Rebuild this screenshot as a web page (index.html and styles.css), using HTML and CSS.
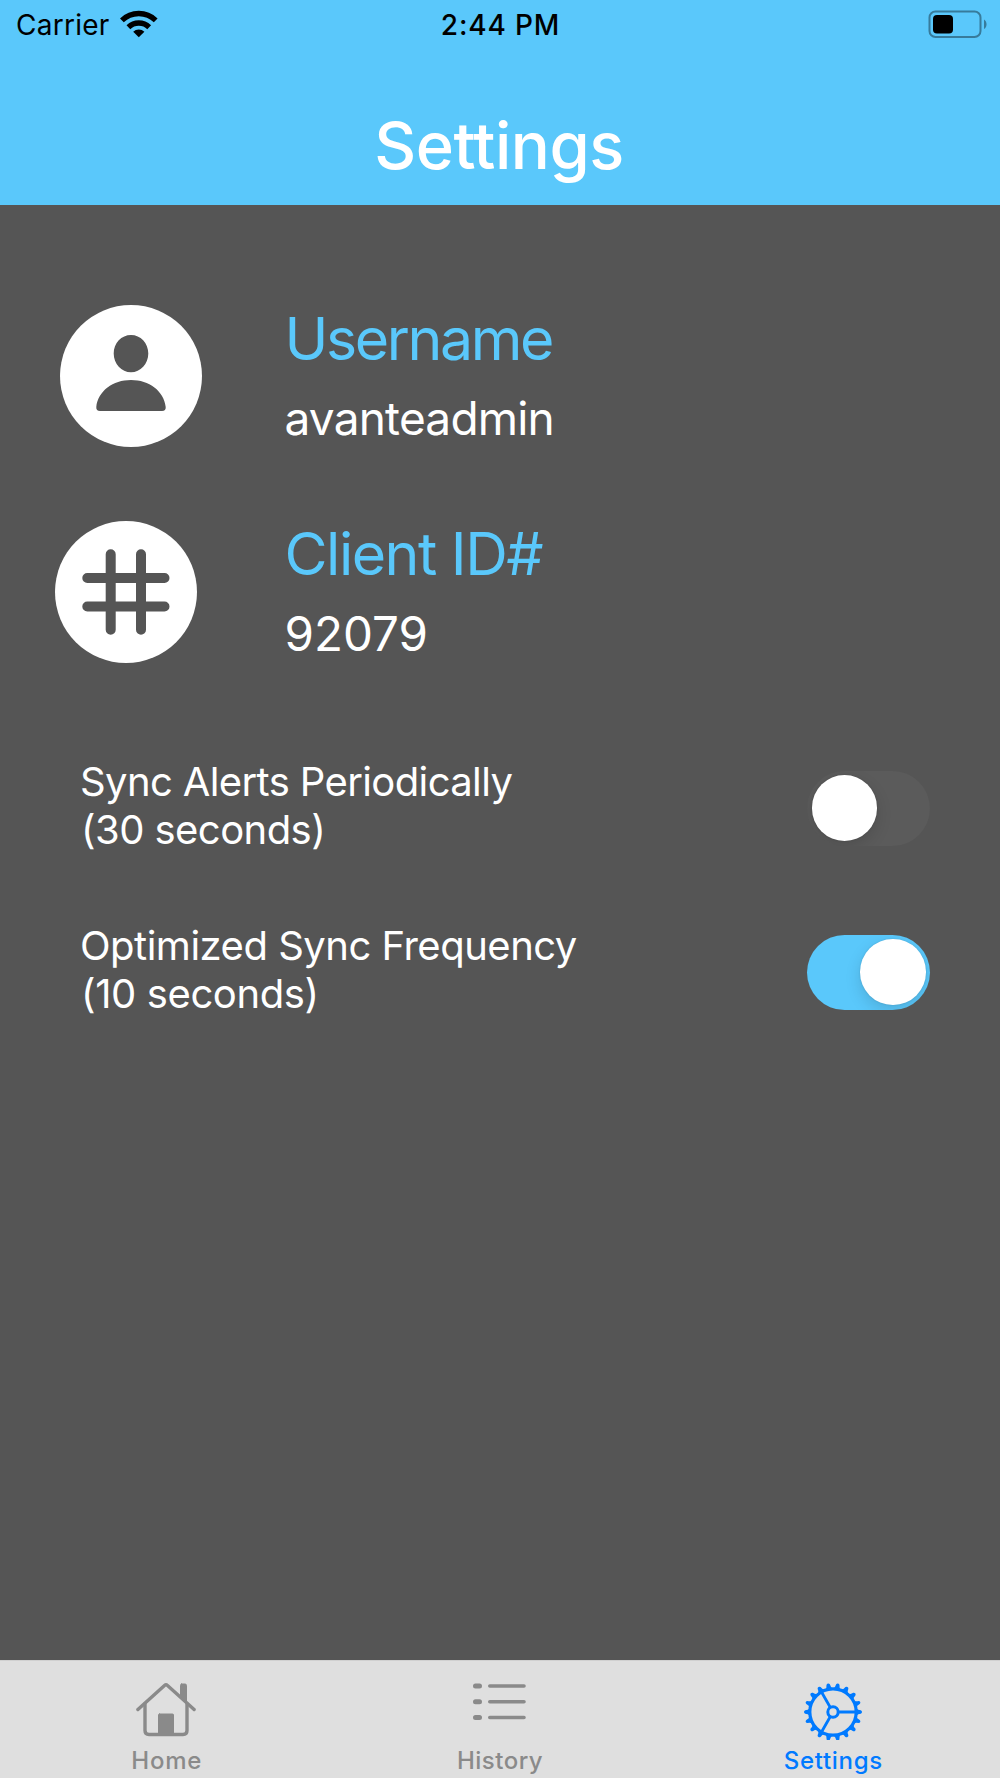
FILE: index.html
```html
<!DOCTYPE html>
<html lang="en">
<head>
<meta charset="utf-8">
<title>Settings</title>
<link rel="stylesheet" href="styles.css">
</head>
<body>
<div class="screen">
  <header class="header">
    <div class="status">
      <div class="status-left">
        <span class="carrier">Carrier</span>
        <svg class="wifi" width="38" height="28" viewBox="0 0 38 28">
          <g fill="none" stroke="#000" stroke-width="5.4">
            <path d="M1.9 10.4A24.2 24.2 0 0 1 35.7 10.4"/>
            <path d="M8.4 17.2A15 15 0 0 1 29.2 17.2"/>
          </g>
          <path d="M18.8 27.2L13.2 21.7A8 8 0 0 1 24.4 21.7Z"/>
        </svg>
      </div>
      <span class="time">2:44 PM</span>
      <div class="status-right">
        <svg class="battery" width="60" height="28" viewBox="0 0 60 28">
          <rect x="1.5" y="1.5" width="51" height="25.500" rx="6" fill="none" stroke="#377b9b" stroke-width="2"/>
          <rect x="5" y="5" width="20" height="18.400" rx="4"/>
          <path d="M56 9.400C59.400 11.500 59.400 16.800 56 19Z" fill="#377b9b"/>
        </svg>
      </div>
    </div>
    <h1 class="title">Settings</h1>
  </header>
  <main class="content">
    <section class="account">
      <svg class="avatar avatar-user" width="142" height="142" viewBox="0 0 142 142">
        <circle cx="71" cy="71" r="71" fill="#fff"/>
        <path fill="#555" d="M71 30C80.500 30 88.300 38 88.300 48.500S80.500 67.300 71 67.300S53.700 59 53.700 48.500S61.500 30 71 30ZM71 75C89 75 104 86 105.700 102Q106 106 102 106H40Q36 106 36.300 102C38 86 53 75 71 75Z"/>
      </svg>
      <div class="account-text">
        <div class="name username">Username</div>
        <div class="value admin">avanteadmin</div>
      </div>
    </section>
    <section class="account account-client">
      <svg class="avatar avatar-client" width="142" height="142" viewBox="0 0 142 142">
        <circle cx="71" cy="71" r="71" fill="#fff"/>
        <path fill="none" stroke="#555" stroke-width="10" stroke-linecap="round" d="M55.700 33.300V108.700M86 33.300V108.700M32.300 57H109.500M32.300 85.500H109.500"/>
      </svg>
      <div class="account-text">
        <div class="name client">Client ID#</div>
        <div class="value number">92079</div>
      </div>
    </section>
    <section class="option">
      <div class="option-label"><div class="alerts">Sync Alerts Periodically</div><div class="thirty">(30 seconds)</div></div>
      <div class="switch"><div class="knob"></div></div>
    </section>
    <section class="option option-second">
      <div class="option-label"><div class="frequency">Optimized Sync Frequency</div><div class="ten">(10 seconds)</div></div>
      <div class="switch switch-on"><div class="knob"></div></div>
    </section>
  </main>
  <nav class="tabs">
    <a class="tab">
      <svg class="tab-icon" width="60" height="60" viewBox="0 0 60 60" fill="none" stroke="#8a8a8a" stroke-width="3.400" stroke-linecap="round" stroke-linejoin="round">
        <path d="M1.900 29.500L28.500 5.500Q30 4.200 31.500 5.500L58.100 29.500"/>
        <path d="M9 24V50.500Q9 54.500 13 54.500H47Q51 54.500 51 50.500V24"/>
        <path d="M45.500 4H49Q50.500 4 50.500 5.500V22L44.500 16.500V5.500Q44.500 4 45.500 4Z" fill="#8a8a8a" stroke-width="1"/>
        <path d="M23.500 34H36.500Q37.500 34 37.500 35V54H22.500V35Q22.500 34 23.500 34Z" fill="#8a8a8a" stroke-width="1"/>
      </svg>
      <span class="tab-label home">Home</span>
    </a>
    <a class="tab">
      <svg class="tab-icon" width="60" height="60" viewBox="0 0 60 60" fill="none" stroke="#8a8a8a" stroke-linecap="round">
        <path stroke-width="5" d="M6.500 6H10.500M6.500 21.800H10.500M6.500 37.500H10.500"/>
        <path stroke-width="3.600" d="M20.800 6H55M20.800 21.800H55M20.800 37.500H55"/>
      </svg>
      <span class="tab-label history">History</span>
    </a>
    <a class="tab tab-active">
      <svg class="tab-icon" width="60" height="60" viewBox="0 0 60 60" fill="none" stroke="#007aff">
        <g id="gear"></g>
        <circle cx="30" cy="32" r="23.200" stroke-width="3.200"/>
        <circle cx="30" cy="32" r="5.200" stroke-width="3"/>
        <path stroke-width="2.800" d="M35.500 32H53M27.200 27.200L18.500 12M27.200 36.800L18.500 52"/>
      </svg>
      <span class="tab-label">Settings</span>
    </a>
  </nav>
</div>
<script src="gear.js"></script>
</body>
</html>
```
FILE: gear.js
```js
// Eighteen teeth spaced evenly round the rim, the first pointing right.
var gear = document.getElementById('gear');
var TEETH = 18;
for (var i = 0; i < TEETH; i++) {
  var tooth = document.createElementNS('http://www.w3.org/2000/svg', 'path');
  tooth.setAttribute('d', 'M53.500 28.500Q55 30 57.800 30.300Q59 30.800 59 32Q59 33.200 57.800 33.700Q55 34 53.500 35.500Z');
  tooth.setAttribute('fill', '#007aff');
  tooth.setAttribute('stroke', 'none');
  tooth.setAttribute('transform', 'rotate(' + i * 360 / TEETH + ' 30 32)');
  gear.appendChild(tooth);
}
```
FILE: styles.css
```css
* { box-sizing: border-box; }
body { margin: 0; font-family: Inter, "Liberation Sans", sans-serif; }
.screen { width: 1000px; height: 1778px; display: flex; flex-direction: column; background: #555; overflow: hidden; white-space: nowrap; }
.header { height: 205.4px; background: #5ac8fb; flex: none; }
.status { display: grid; grid-template-columns: 1fr auto 1fr; height: 51px; align-items: center; color: #000; }
.status-left { display: flex; align-items: center; padding-left: 16px; }
.carrier { font-size: 28px; line-height: 51px; letter-spacing: 0.25px; }
.wifi { margin: -4px 0 0 10px; }
.time { font-size: 28px; font-weight: 550; line-height: 51px; letter-spacing: 0.850px; padding-left: 1px; }
.status-right { display: flex; justify-content: flex-end; padding-right: 12px; }
.battery { margin-top: -3px; }
.title { margin: 0; padding: 56px 2px 0 0; text-align: center; font-size: 65px; font-weight: 500; line-height: 78px; letter-spacing: -0.5px; color: #fff; }
.content { flex: 1; padding-top: 96px; }
.account { display: flex; height: 149px; padding-left: 59.500px; }
.account-client { margin-top: 68px; padding-left: 54.500px; }
.avatar { flex: none; margin-top: 3px; }
.avatar-user { margin-top: 3.500px; }
.account-text { padding-left: 83px; }
.account-client .account-text { padding-left: 88px; }
.name { padding-top: 2px; font-size: 59px; line-height: 72px; color: #5ac8fb; }
.value { margin-top: 11px; font-size: 46px; line-height: 64px; color: #fff; }
.username { letter-spacing: -2.400px; }
.admin { letter-spacing: -0.800px; }
.client { padding-top: 0; letter-spacing: -1.500px; }
.number { margin-top: 12px; font-size: 47.500px; letter-spacing: 0; }
.option { display: flex; justify-content: space-between; align-items: center; margin-top: 90.500px; padding: 0 70px 0 80px; height: 96px; }
.option-second { margin-top: 68px; }
.option-label { font-size: 40px; line-height: 48px; color: #fff; }
.alerts { letter-spacing: -0.620px; }
.thirty { padding-left: 1px; letter-spacing: -0.560px; }
.frequency { letter-spacing: -0.500px; }
.ten { padding-left: 1px; letter-spacing: -0.400px; }
.switch { width: 123px; height: 75px; margin-top: 5px; padding: 4.500px; border-radius: 38px; background: #5b5b5b; display: flex; overflow: hidden; }
.switch-on { background: #5ac8fb; justify-content: flex-end; }
.knob { width: 65.500px; height: 65.500px; border-radius: 50%; background: #fff; box-shadow: 0 6px 16px rgba(0,0,0,.13), 0 0 2px rgba(0,0,0,.15); }
.tabs { height: 118px; flex: none; display: grid; grid-template-columns: repeat(3, 1fr); background: #dfdfdf; border-top: 1px solid #d0d0d0; }
.tab { display: flex; flex-direction: column; align-items: center; padding-top: 19px; color: #8a8a8a; }
.tab-icon { margin-right: 1px; }
.tab-active { color: #007aff; }
.tab-label { margin-top: 6px; font-size: 24px; line-height: 30px; font-weight: 500; letter-spacing: 0.700px; }
.history { letter-spacing: 0.500px; }
```
